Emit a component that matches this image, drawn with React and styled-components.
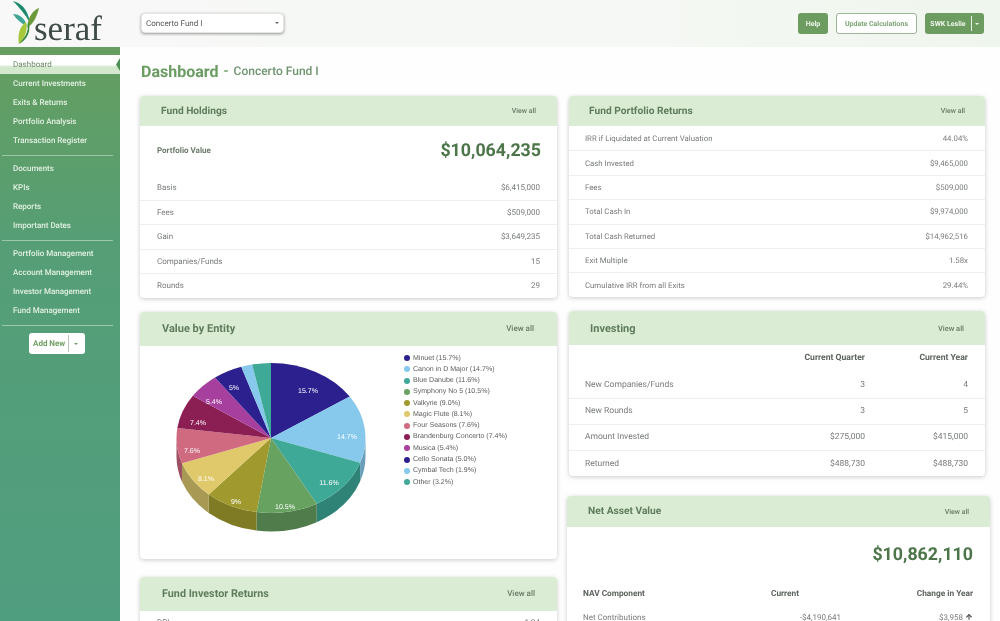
import React from "react";
import styled, { createGlobalStyle } from "styled-components";
import { ArrowUp } from "lucide-react";

const Global = createGlobalStyle`
  html, body { margin: 0; padding: 0; background: #fff; }
  body { font-family: Roboto, "Liberation Sans", sans-serif; overflow: hidden; text-rendering: geometricPrecision; }
  * { box-sizing: border-box; }
`;

const Page = styled.div`
  display: flex;
  width: 1000px;
  height: 621px;
  overflow: hidden;
  background: #fefefe;
  filter: blur(0.45px);
`;
const Side = styled.aside`
  width: 120px;
  flex: none;
  display: flex;
  flex-direction: column;
`;
const Logo = styled.div`
  height: 47px;
  display: flex;
  align-items: flex-end;
  padding-left: 13px;
  background: #f7f8f7;
`;
const LogoMark = styled.svg`
  width: 27px;
  height: 46px;
  flex: none;
  margin-bottom: 1px;
`;
const LogoWord = styled.span`
  font-family: "Liberation Serif", serif;
  font-size: 35px;
  line-height: 37px;
  margin-left: -6px;
  color: #3f4b49;
`;
const Nav = styled.nav`
  flex: 1;
  padding-top: 8px;
  background: linear-gradient(180deg, #659e5f 0%, #559e76 35%, #509e80 100%);
`;
const NavItem = styled.div`
  position: relative;
  height: 19px;
  padding-left: 13px;
  font-size: 8px;
  line-height: 19px;
  font-weight: ${(p) => (p.$active ? 400 : 500)};
  color: ${(p) => (p.$active ? "#6f8a6c" : "#e2f0e2")};
  background: ${(p) => (p.$active ? "linear-gradient(180deg,#fff 0%,#fff 52%,#d3e8cc 62%,#d3e8cc 100%)" : "none")};
`;
const Notch = styled.span`
  position: absolute;
  right: 0;
  top: 3px;
  width: 4px;
  height: 13px;
  background: #4f8f55;
  clip-path: polygon(100% 0, 0 50%, 100% 100%);
`;
const NavRule = styled.hr`
  margin: 5px 7px 3px 2px;
  border: 0;
  height: 1px;
  background: rgba(225, 240, 225, 0.5);
`;
const AddWrap = styled.div`
  display: flex;
  padding: 4px 0 0 29px;
`;
const AddButton = styled.div`
  display: flex;
  align-items: center;
  width: 56px;
  height: 21px;
  background: #fff;
  border-radius: 3px;
  color: #6f9f60;
  font-size: 8px;
  font-weight: 700;
  padding-left: 4px;
`;
const AddSplit = styled.span`
  width: 1px;
  height: 17px;
  margin: 0 5px 0 3px;
  background: #b9c7b8;
`;
const Caret = styled.span`
  width: 0;
  height: 0;
  border-left: 2px solid transparent;
  border-right: 2px solid transparent;
  border-top: 2px solid ${(p) => p.$color || "#777"};
`;
const Main = styled.main`
  flex: 1;
  min-width: 0;
`;
const Top = styled.header`
  height: 47px;
  display: flex;
  align-items: center;
  padding: 0 16px 0 21px;
  background: linear-gradient(90deg, #f7f8f7 0%, #f5f8f4 60%, #eff6ed 100%);
`;
const Select = styled.div`
  width: 143px;
  height: 20px;
  margin-top: -1px;
  display: flex;
  align-items: center;
  justify-content: space-between;
  padding: 0 4px;
  background: #fff;
  border-radius: 4px;
  border: 1px solid #e3e6e3;
  box-shadow: 0 1px 3px rgba(0, 0, 0, 0.4);
  font-size: 8px;
  color: #555;
`;
const TopButtons = styled.div`
  margin-left: auto;
  display: flex;
  gap: 8px;
`;
const Btn = styled.div`
  height: 21px;
  width: ${(p) => p.$w}px;
  display: flex;
  align-items: center;
  justify-content: center;
  border-radius: 3px;
  font-size: 7px;
  font-weight: 700;
  color: ${(p) => (p.$outline ? "#7fa577" : "#eef6ec")};
  background: ${(p) => (p.$outline ? "#fff" : "#6c9c5f")};
  border: ${(p) => (p.$outline ? "1.5px solid #9cb497" : "none")};
`;
const BtnSplit = styled.span`
  width: 1px;
  height: 15px;
  background: #e8f2e6;
  margin: 0 3px 0 5px;
`;
const Content = styled.div`
  padding: 0 15px 0 20px;
`;
const Title = styled.div`
  height: 49px;
  display: flex;
  align-items: center;
  padding: 0 0 1px 1px;
  color: #6a9c62;
`;
const TitleMain = styled.span`
  font-size: 16px;
  font-weight: 700;
`;
const TitleDash = styled.span`
  font-size: 13px;
  font-weight: 700;
  margin: 0 5px;
`;
const TitleSub = styled.span`
  font-size: 12px;
  font-weight: 500;
  color: #6f9570;
`;
const Columns = styled.div`
  display: grid;
  grid-template-columns: 417px 416px;
  gap: 12px;
  align-items: start;
`;
const Col = styled.div`
  display: flex;
  flex-direction: column;
`;
const Card = styled.section`
  background: #fff;
  border-radius: 4px;
  box-shadow: 0 1px 4px rgba(60, 70, 60, 0.28);
  margin-bottom: ${(p) => p.$mb ?? 14}px;
  margin-left: ${(p) => p.$ml || 0}px;
  margin-right: ${(p) => p.$mr || 0}px;
`;
const CardHead = styled.div`
  height: ${(p) => p.$h}px;
  display: flex;
  align-items: center;
  justify-content: space-between;
  padding: ${(p) => p.$pt || 0}px ${(p) => p.$pr || 21}px 0 ${(p) => p.$pl || 21}px;
  background: #daedd4;
  border-radius: 4px 4px 0 0;
`;
const CardTitle = styled.h2`
  margin: 0;
  font-size: ${(p) => p.$size || 10.2}px;
  font-weight: 700;
  color: #5f7c5c;
`;
const ViewAll = styled.span`
  font-size: ${(p) => p.$size || 7}px;
  font-weight: 500;
  color: #6a7a68;
`;
const Hero = styled.div`
  height: 49px;
  display: flex;
  align-items: center;
  justify-content: space-between;
  padding: 0 16px 0 17px;
`;
const HeroLabel = styled.span`
  font-size: 8px;
  font-weight: 700;
  color: #6a7a68;
`;
const HeroValue = styled.span`
  font-size: 17.8px;
  font-weight: 700;
  color: #4c7549;
`;
const Row = styled.div`
  height: ${(p) => p.$h || 24.5}px;
  display: grid;
  grid-template-columns: ${(p) => p.$cols || "1fr auto"};
  align-items: center;
  padding: 0 17px 0 ${(p) => p.$pl || 16}px;
  font-size: ${(p) => p.$size || 8}px;
  font-weight: ${(p) => (p.$head ? 700 : 400)};
  color: ${(p) => (p.$head ? "#5c625c" : "#777c77")};
  border-top: ${(p) => (p.$line ? "1px solid #eef0ee" : "0")};
`;
const Num = styled.span`
  display: flex;
  justify-content: flex-end;
  align-items: center;
  gap: 2px;
  padding-right: ${(p) => p.$pr || 0}px;
`;
const PieBody = styled.div`
  height: 213px;
  display: flex;
`;
const PieSvg = styled.svg`
  width: 250px;
  height: 213px;
  flex: none;
`;
const Legend = styled.ul`
  list-style: none;
  margin: 0;
  padding: 7px 0 0 14px;
`;
const LegendRow = styled.li`
  height: 11.27px;
  display: flex;
  align-items: center;
  gap: 3px;
  font-family: "Liberation Sans", sans-serif;
  font-size: 7.05px;
  color: #5a5f5a;
`;
const Dot = styled.span`
  width: 6px;
  height: 6px;
  border-radius: 50%;
  background: ${(p) => p.$c};
`;
const HeroRight = styled.div`
  height: 55px;
  display: flex;
  align-items: center;
  justify-content: flex-end;
  padding: 0 17px 1px 0;
`;

const slices = [
  ["Minuet", 15.7, "#2c1f8e", "#241a73"],
  ["Canon in D Major", 14.7, "#86c9ec", "#6a9fbb"],
  ["Blue Danube", 11.6, "#3fa998", "#2f8376"],
  ["Symphony No 5", 10.5, "#68a261", "#4f7c4a"],
  ["Valkyrie", 9.0, "#a09a2e", "#7f7a24"],
  ["Magic Flute", 8.1, "#e0c96a", "#a89a55"],
  ["Four Seasons", 7.6, "#cf6a80", "#9c5062"],
  ["Brandenburg Concerto", 7.4, "#8b1f54", "#6c1841"],
  ["Musica", 5.4, "#a73f9e", "#80307a"],
  ["Cello Sonata", 5.0, "#2c1f8e", "#241a73"],
  ["Cymbal Tech", 1.9, "#86c9ec", "#6a9fbb"],
  ["Other", 3.2, "#3fa998", "#2f8376"],
];
const labels = [
  ["15.7%", 168, 45], ["14.7%", 207, 91], ["11.6%", 189, 137], ["10.5%", 145, 161], ["9%", 96, 156],
  ["8.1%", 66, 133], ["7.6%", 52, 105], ["7.4%", 58, 77], ["5.4%", 74, 56], ["5%", 94, 42],
];
const CX = 131, CY = 92, RX = 94.5, RY = 75, DEPTH = 18.5;
const pt = (deg, dy = 0) => {
  const r = (deg * Math.PI) / 180;
  return [CX + RX * Math.sin(r), CY - RY * Math.cos(r) + dy];
};
const total = slices.reduce((s, x) => s + x[1], 0);
const wedges = slices.reduce((acc, s) => {
  const start = acc.length ? acc[acc.length - 1].end : 0;
  acc.push({ c: s[2], side: s[3], start, end: start + (s[1] / total) * 360 });
  return acc;
}, []);
const topPath = (w) => {
  const [x1, y1] = pt(w.start);
  const [x2, y2] = pt(w.end);
  return `M${CX} ${CY}L${x1} ${y1}A${RX} ${RY} 0 ${w.end - w.start > 180 ? 1 : 0} 1 ${x2} ${y2}Z`;
};
const sidePath = (w) => {
  const a = Math.max(w.start, 90), b = Math.min(w.end, 270);
  if (b <= a) return null;
  const [x1, y1] = pt(a);
  const [x2, y2] = pt(b);
  return `M${x1} ${y1}A${RX} ${RY} 0 0 1 ${x2} ${y2}L${x2} ${y2 + DEPTH}A${RX} ${RY} 0 0 0 ${x1} ${y1 + DEPTH}Z`;
};

const Pie = () => (
  <PieSvg viewBox="0 0 250 213">
    {wedges.map((w, i) => {
      const d = sidePath(w);
      return d ? <path key={i} d={d} fill={w.side} /> : null;
    })}
    {wedges.map((w, i) => (
      <path key={i} d={topPath(w)} fill={w.c} />
    ))}
    {labels.map(([t, x, y]) => (
      <text key={t} x={x} y={y} textAnchor="middle" dominantBaseline="middle" fontFamily="Liberation Sans, sans-serif" fontSize="7" fill="#fff">
        {t}
      </text>
    ))}
  </PieSvg>
);

const groups = [
  ["Dashboard", "Current Investments", "Exits & Returns", "Portfolio Analysis", "Transaction Register"],
  ["Documents", "KPIs", "Reports", "Important Dates"],
  ["Portfolio Management", "Account Management", "Investor Management", "Fund Management"],
];
const holdings = [["Basis", "$6,415,000"], ["Fees", "$509,000"], ["Gain", "$3,649,235"], ["Companies/Funds", "15"], ["Rounds", "29"]];
const returns = [
  ["IRR if Liquidated at Current Valuation", "44.04%"], ["Cash Invested", "$9,465,000"], ["Fees", "$509,000"],
  ["Total Cash In", "$9,974,000"], ["Total Cash Returned", "$14,962,516"], ["Exit Multiple", "1.58x"],
  ["Cumulative IRR from all Exits", "29.44%"],
];
const investing = [
  ["New Companies/Funds", "3", "4"], ["New Rounds", "3", "5"], ["Amount Invested", "$275,000", "$415,000"], ["Returned", "$488,730", "$488,730"],
];
const invCols = "1fr 90px 103px";
const navCols = "1fr 100px 132px";

export default function App() {
  return (
    <Page>
      <Global />
      <Side>
        <Logo>
          <LogoMark viewBox="13 0 27 46">
            <path d="M13 1C21 3 28 9 30 23C25 14 19 7 13 1Z" fill="#1d8a6d" />
            <path d="M39 8C33 10 28 17 27 28C33 24 37 17 39 8Z" fill="#6b9a3c" />
            <path d="M13 14C19 14 25 18 27 26C22 24 17 20 13 14Z" fill="#3fa596" />
            <path d="M19 44C17 35 20 26 26 22C28 30 25 38 19 44Z" fill="#a8c83c" />
            <path d="M19 44C24 38 29 33 28 22C32 30 27 40 19 44Z" fill="#35883f" />
          </LogoMark>
          <LogoWord>seraf</LogoWord>
        </Logo>
        <Nav>
          {groups.map((g, i) => (
            <React.Fragment key={i}>
              {g.map((t) => (
                <NavItem key={t} $active={t === "Dashboard"}>
                  {t}
                  {t === "Dashboard" && <Notch />}
                </NavItem>
              ))}
              <NavRule />
            </React.Fragment>
          ))}
          <AddWrap>
            <AddButton>
              Add New
              <AddSplit />
              <Caret $color="#6f9f60" />
            </AddButton>
          </AddWrap>
        </Nav>
      </Side>
      <Main>
        <Top>
          <Select>
            Concerto Fund I
            <Caret $color="#666" />
          </Select>
          <TopButtons>
            <Btn $w={30}>Help</Btn>
            <Btn $w={81} $outline>Update Calculations</Btn>
            <Btn $w={59}>
              SWK Leslie
              <BtnSplit />
              <Caret $color="#eef6ec" />
            </Btn>
          </TopButtons>
        </Top>
        <Content>
          <Title>
            <TitleMain>Dashboard</TitleMain>
            <TitleDash>-</TitleDash>
            <TitleSub>Concerto Fund I</TitleSub>
          </Title>
          <Columns>
            <Col>
              <Card $mb={14}>
                <CardHead $h={30}>
                  <CardTitle>Fund Holdings</CardTitle>
                  <ViewAll>View all</ViewAll>
                </CardHead>
                <Hero>
                  <HeroLabel>Portfolio Value</HeroLabel>
                  <HeroValue>$10,064,235</HeroValue>
                </Hero>
                {holdings.map(([a, b], i) => (
                  <Row key={a} $line={i > 0} $pl={17}>
                    <span>{a}</span>
                    <Num>{b}</Num>
                  </Row>
                ))}
              </Card>
              <Card $mb={18}>
                <CardHead $h={34} $pl={22} $pr={23}>
                  <CardTitle $size={11}>Value by Entity</CardTitle>
                  <ViewAll $size={8}>View all</ViewAll>
                </CardHead>
                <PieBody>
                  <Pie />
                  <Legend>
                    {slices.map((s) => (
                      <LegendRow key={s[0]}>
                        <Dot $c={s[2]} />
                        {s[0]} ({s[1].toFixed(1)}%)
                      </LegendRow>
                    ))}
                  </Legend>
                </PieBody>
              </Card>
              <Card>
                <CardHead $h={34} $pl={22} $pr={22}>
                  <CardTitle $size={10.8}>Fund Investor Returns</CardTitle>
                  <ViewAll $size={8}>View all</ViewAll>
                </CardHead>
                <Row $h={24} $pl={17}>
                  <span>DPI</span>
                  <Num>1.24</Num>
                </Row>
              </Card>
            </Col>
            <Col>
              <Card $mb={14}>
                <CardHead $h={30} $pl={20} $pr={20}>
                  <CardTitle>Fund Portfolio Returns</CardTitle>
                  <ViewAll>View all</ViewAll>
                </CardHead>
                {returns.map(([a, b], i) => (
                  <Row key={a} $line={i > 0} $h={24.4} $size={7.8}>
                    <span>{a}</span>
                    <Num>{b}</Num>
                  </Row>
                ))}
              </Card>
              <Card $mb={20}>
                <CardHead $h={34} $pt={1}>
                  <CardTitle $size={11}>Investing</CardTitle>
                  <ViewAll $size={7.5}>View all</ViewAll>
                </CardHead>
                <Row $head $cols={invCols} $h={27} $size={8.6}>
                  <span />
                  <Num>Current Quarter</Num>
                  <Num>Current Year</Num>
                </Row>
                {investing.map(([a, b, c], i) => (
                  <Row key={a} $cols={invCols} $line={i > 0} $h={26.1} $size={8.5}>
                    <span>{a}</span>
                    <Num>{b}</Num>
                    <Num>{c}</Num>
                  </Row>
                ))}
              </Card>
              <Card $ml={-2} $mr={-5}>
                <CardHead $h={31}>
                  <CardTitle>Net Asset Value</CardTitle>
                  <ViewAll>View all</ViewAll>
                </CardHead>
                <HeroRight>
                  <HeroValue>$10,862,110</HeroValue>
                </HeroRight>
                <Row $head $cols={navCols} $h={23} $size={8.3}>
                  <span>NAV Component</span>
                  <Num $pr={42}>Current</Num>
                  <Num>Change in Year</Num>
                </Row>
                <Row $cols={navCols} $h={24}>
                  <span>Net Contributions</span>
                  <Num>-$4,190,641</Num>
                  <Num>$3,958 <ArrowUp size={8} strokeWidth={3.5} color="#555" /></Num>
                </Row>
              </Card>
            </Col>
          </Columns>
        </Content>
      </Main>
    </Page>
  );
}
